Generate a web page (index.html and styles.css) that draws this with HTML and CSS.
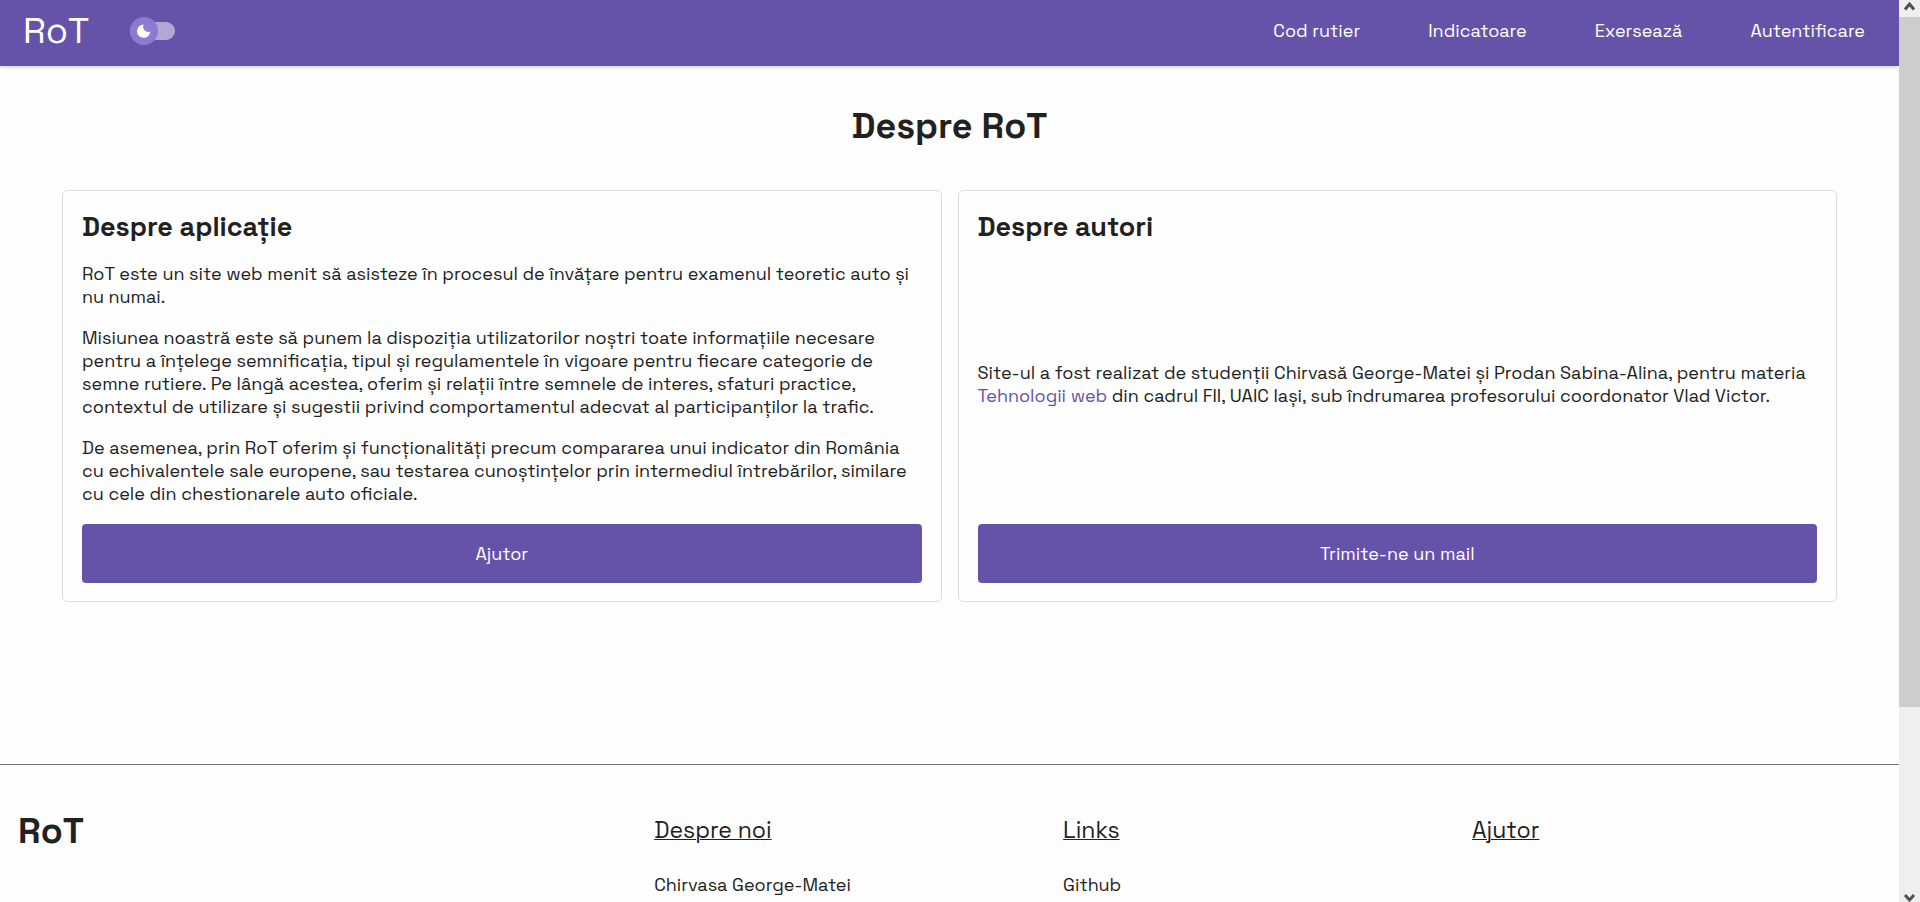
FILE: index.html
```html
<!DOCTYPE html>
<html lang="ro">
<head>
<meta charset="utf-8">
<meta name="viewport" content="width=device-width, initial-scale=1">
<title>Despre RoT</title>
<link rel="stylesheet" href="styles.css">
</head>
<body>
<div class="window">
  <div class="page">
    <header class="topbar">
      <a class="logo" href="#">RoT</a>
      <label class="switch">
        <input class="switch-input" type="checkbox" aria-label="Mod întunecat">
        <span class="switch-thumb">
          <svg class="moon" viewBox="0 0 14 14" aria-hidden="true"><path d="M13.400 7.600A6.700 6.700 0 1 1 6.800 0.400A5.200 5.200 0 0 0 13.400 7.600Z"/></svg>
        </span>
      </label>
      <nav class="menu">
        <a href="#">Cod rutier</a>
        <a href="#">Indicatoare</a>
        <a href="#">Exersează</a>
        <a href="#">Autentificare</a>
      </nav>
    </header>
    <main class="content">
      <h1 class="title">Despre RoT</h1>
      <div class="cards">
        <section class="card">
          <h2 class="card-title">Despre aplicație</h2>
          <div class="card-text">
            <p>RoT este un site web menit să asisteze în procesul de învățare pentru examenul teoretic auto și nu numai.</p>
            <p>Misiunea noastră este să punem la dispoziția utilizatorilor noștri toate informațiile necesare pentru a înțelege semnificația, tipul și regulamentele în vigoare pentru fiecare categorie de semne rutiere. Pe lângă acestea, oferim și relații între semnele de interes, sfaturi practice, contextul de utilizare și sugestii privind comportamentul adecvat al participanților la trafic.</p>
            <p>De asemenea, prin RoT oferim și funcționalități precum compararea unui indicator din România cu echivalentele sale europene, sau testarea cunoștințelor prin intermediul întrebărilor, similare cu cele din chestionarele auto oficiale.</p>
          </div>
          <button class="button" type="button">Ajutor</button>
        </section>
        <section class="card">
          <h2 class="card-title">Despre autori</h2>
          <div class="card-text">
            <p>Site-ul a fost realizat de studenții Chirvasă George-Matei și Prodan Sabina-Alina, pentru materia <a class="link" href="#">Tehnologii web</a> din cadrul FII, UAIC Iași, sub îndrumarea profesorului coordonator Vlad Victor.</p>
          </div>
          <button class="button" type="button">Trimite-ne un mail</button>
        </section>
      </div>
    </main>
    <footer class="footer">
      <div class="footer-brand">RoT</div>
      <div class="footer-column">
        <h3 class="footer-title">Despre noi</h3>
        <a href="#">Chirvasa George-Matei</a>
      </div>
      <div class="footer-column">
        <h3 class="footer-title">Links</h3>
        <a href="#">Github</a>
      </div>
      <div class="footer-column">
        <h3 class="footer-title">Ajutor</h3>
      </div>
    </footer>
  </div>
  <div class="scrollbar" aria-hidden="true">
    <svg class="arrow" viewBox="0 0 21 17"><path d="M6 9.500L10.500 4L15 9.500" /></svg>
    <div class="scroll-thumb"></div>
    <div class="scroll-rest"></div>
    <svg class="arrow" viewBox="0 0 21 17"><path d="M6 10L10.500 15L15 10" /></svg>
  </div>
</div>
</body>
</html>
```
FILE: styles.css
```css
* { box-sizing: border-box; }

body {
  margin: 0;
  font-family: "Space Grotesk", Inter, "Liberation Sans", sans-serif;
  font-size: 18px;
  line-height: 23px;
  color: #212121;
  background: #fff;
}

a { color: inherit; text-decoration: none; }

.window {
  display: grid;
  grid-template-columns: 1fr 21px;
  height: 100vh;
}

.page {
  display: flex;
  flex-direction: column;
  overflow: hidden;
  background: #fefefe;
}

.topbar {
  display: flex;
  flex-shrink: 0;
  align-items: center;
  padding: 8px 34px 12px 23px;
  color: #fff;
  background: #6553aa;
  box-shadow: 0 1px 4px rgba(0, 0, 0, 0.2);
}

.logo {
  font-size: 36px;
  line-height: 46px;
}

.switch {
  display: flex;
  align-items: center;
  margin-left: 41px;
}

.switch-input {
  appearance: none;
  width: 45px;
  height: 18px;
  margin: 0;
  border-radius: 9px;
  background: #b1a8d5;
}

.switch-thumb {
  display: flex;
  align-items: center;
  justify-content: center;
  width: 28px;
  height: 28px;
  margin-left: -45px;
  border-radius: 50%;
  background: #8c7bd1;
}

.moon { width: 14px; height: 14px; fill: #fff; }

.menu {
  display: flex;
  gap: 68px;
  margin-left: auto;
  padding-bottom: 2px;
}

.content { flex-shrink: 0; padding: 37px 62px 162px; }

.title {
  margin: 0 0 41px;
  font-size: 36px;
  line-height: 46px;
  text-align: center;
}

.cards {
  display: grid;
  grid-template-columns: 1fr 1fr;
  gap: 16px;
}

.card {
  display: flex;
  flex-direction: column;
  padding: 18px 19px;
  border: 1px solid #ddd;
  border-radius: 5px;
}

.card-title {
  margin: 0;
  font-size: 27px;
  line-height: 36px;
}

.card-text {
  display: flex;
  flex: 1;
  flex-direction: column;
  justify-content: center;
  gap: 18px;
  padding: 17px 0 19px;
}

.card-text p { margin: 0; }

.link { color: #6553aa; }

.button {
  padding: 18px;
  border: 0;
  border-radius: 4px;
  font: inherit;
  color: #fff;
  background: #6553aa;
}

.footer {
  display: grid;
  flex-shrink: 0;
  grid-template-columns: 14fr 9fr 9fr 9fr;
  padding: 43px 18px;
  border-top: 1px solid #777;
}

.footer-brand {
  font-size: 36px;
  font-weight: 700;
  line-height: 46px;
}

.footer-column {
  display: flex;
  flex-direction: column;
  align-items: flex-start;
  gap: 28px;
  padding-top: 7px;
}

.footer-title {
  margin: 0;
  font-size: 23px;
  font-weight: 400;
  line-height: 30px;
  text-decoration: underline;
  text-decoration-thickness: 1px;
}

.scrollbar {
  display: flex;
  flex-direction: column;
  background: #efefef;
}

.arrow {
  flex: none;
  width: 21px;
  height: 17px;
  fill: none;
  stroke: #505050;
  stroke-width: 3;
}

.scroll-thumb { flex: 690; background: #cdcdcd; }

.scroll-rest { flex: 178; }
```
